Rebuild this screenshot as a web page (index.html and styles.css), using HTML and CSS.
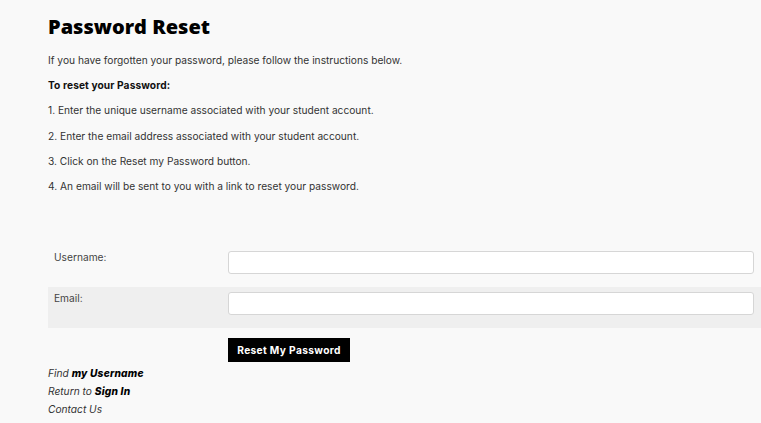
FILE: index.html
```html
<!DOCTYPE html>
<html>
<head>
<meta charset="utf-8">
<link rel="stylesheet" href="styles.css">
</head>
<body>
<div class="page">
  <h1 class="title">Password Reset</h1>
  <p class="txt">If you have forgotten your password, please follow the instructions below.</p>
  <p class="txt strong">To reset your Password:</p>
  <p class="txt">1. Enter the unique username associated with your student account.</p>
  <p class="txt">2. Enter the email address associated with your student account.</p>
  <p class="txt">3. Click on the Reset my Password button.</p>
  <p class="txt">4. An email will be sent to you with a link to reset your password.</p>

  <form class="form">
    <div class="row">
      <label class="lbl" for="u">Username:</label>
      <div class="field"><input class="inp" id="u" type="text"></div>
    </div>
    <div class="row alt">
      <label class="lbl" for="e">Email:</label>
      <div class="field"><input class="inp" id="e" type="text"></div>
    </div>
    <div class="actions">
      <button class="btn" type="button">Reset My Password</button>
    </div>
  </form>

  <div class="links">
    <a class="lnk" href="#">Find <b>my Username</b></a>
    <a class="lnk" href="#">Return to <b>Sign In</b></a>
    <a class="lnk" href="#">Contact Us</a>
  </div>
</div>
</body>
</html>
```
FILE: styles.css
```css
html, body {
  margin: 0;
  padding: 0;
  background: #f9f9f9;
}
body {
  font-family: Inter, "DejaVu Sans", sans-serif;
  color: #333;
}
.page {
  padding: 13px 0 0 48px;
}
.title {
  margin: 0 0 12px;
  font-family: "Open Sans", sans-serif;
  font-size: 20px;
  line-height: 28px;
  font-weight: 800;
  color: #000;
}
.txt {
  margin: 0 0 10.2px;
  font-size: 10.2px;
  line-height: 15px;
}
.strong {
  font-weight: 700;
  color: #111;
  letter-spacing: 0.1px;
}
.form {
  margin-top: 52px;
}
.row {
  display: grid;
  grid-template-columns: 180px 1fr;
  height: 41px;
  box-sizing: border-box;
  padding: 5px 7px 0 0;
}
.alt {
  background: #efefef;
}
.lbl {
  padding-left: 6px;
  font-size: 10.2px;
  line-height: 12px;
  color: #444;
}
.inp {
  display: block;
  width: 100%;
  height: 23px;
  box-sizing: border-box;
  border: 1px solid #d6d6d6;
  border-radius: 3px;
  background: #fff;
  margin: 0;
}
.actions {
  padding: 10px 0 0 180px;
}
.btn {
  display: block;
  width: 122px;
  height: 24px;
  background: #000;
  color: #fff;
  border: 0;
  font-family: inherit;
  font-size: 10.2px;
  font-weight: 700;
  letter-spacing: 0.35px;
  padding: 0;
}
.links {
  display: flex;
  flex-direction: column;
  padding-top: 2px;
}
.lnk {
  font-size: 10.2px;
  line-height: 18px;
  font-style: italic;
  color: #333;
  text-decoration: none;
}
.lnk b {
  color: #000;
  font-weight: 800;
  letter-spacing: 0.2px;
}
```
